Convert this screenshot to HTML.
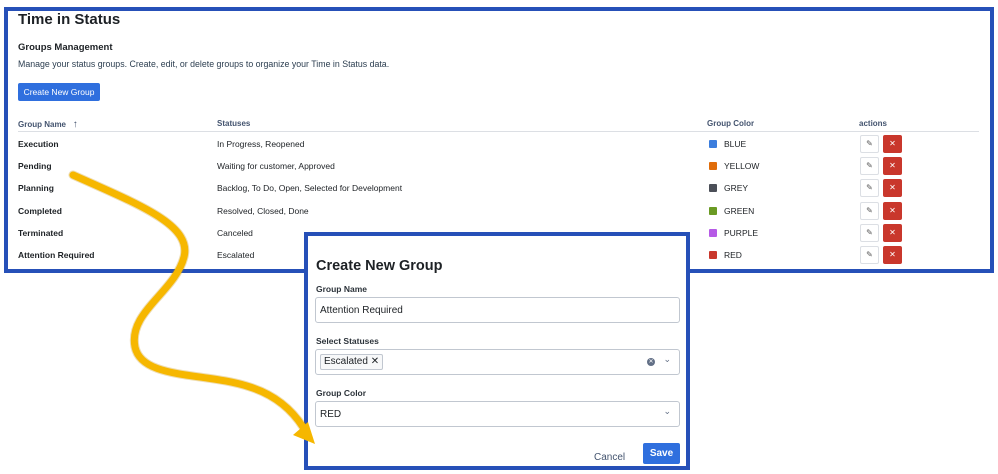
<!DOCTYPE html>
<html><head><meta charset="utf-8"><style>
*{box-sizing:border-box;margin:0;padding:0}
body{width:998px;height:474px;background:#fff;position:relative;overflow:hidden;font-family:"Liberation Sans",Arial,sans-serif;color:#1d2125}
.abs{position:absolute;white-space:nowrap}
#main{position:absolute;left:4px;top:7px;width:990px;height:266px;border:4px solid #2650b8;background:#fff}
.h{font-size:8px;color:#44546f;font-weight:bold}
.cell{font-size:8.5px;line-height:10px}
.b{font-weight:bold}
.sw{position:absolute;width:8px;height:8px;border-radius:1px}
.ed{position:absolute;width:19px;height:18px;border:1px solid #dcdfe4;background:#fff;border-radius:2px;font-size:8px;color:#555;text-align:center;line-height:16px}
.dl{position:absolute;width:19px;height:18px;background:#c9372c;border-radius:2px;color:#fff;font-size:8px;text-align:center;line-height:18px}
#modal{position:absolute;left:304px;top:232px;width:386px;height:238px;border:4px solid #2650b8;background:#fff}
.lbl{font-size:8.5px;font-weight:bold;color:#2c333a}
.inp{position:absolute;left:7px;width:365px;height:26px;border:1px solid #c1c7d0;border-radius:3px;font-size:10px;padding-left:4px;display:flex;align-items:center}
</style></head><body>
<div id="main"></div>
<div class="abs b" style="left:18px;top:11px;font-size:15px">Time in Status</div>
<div class="abs b" style="left:18px;top:42px;font-size:9.5px">Groups Management</div>
<div class="abs" style="left:18px;top:59px;font-size:8.8px;color:#2c3e50">Manage your status groups. Create, edit, or delete groups to organize your Time in Status data.</div>
<div class="abs" style="left:18px;top:83px;width:82px;height:18px;background:#2f6fde;border-radius:2px;color:#fff;font-size:8.5px;text-align:center;line-height:18px">Create New Group</div>
<div class="abs h" style="left:18px;top:119px">Group Name &nbsp;&nbsp;<span style="font-weight:normal;font-size:10px">↑</span></div>
<div class="abs h" style="left:217px;top:119px">Statuses</div>
<div class="abs h" style="left:707px;top:119px">Group Color</div>
<div class="abs h" style="left:859px;top:119px">actions</div>
<div class="abs" style="left:18px;top:131px;width:961px;height:1px;background:#dcdfe4"></div>

<div class="abs cell b" style="left:18px;top:139px">Execution</div><div class="abs cell" style="left:217px;top:139px">In Progress, Reopened</div>
<div class="abs cell b" style="left:18px;top:161px">Pending</div><div class="abs cell" style="left:217px;top:161px">Waiting for customer, Approved</div>
<div class="abs cell b" style="left:18px;top:183px">Planning</div><div class="abs cell" style="left:217px;top:183px">Backlog, To Do, Open, Selected for Development</div>
<div class="abs cell b" style="left:18px;top:206px">Completed</div><div class="abs cell" style="left:217px;top:206px">Resolved, Closed, Done</div>
<div class="abs cell b" style="left:18px;top:228px">Terminated</div><div class="abs cell" style="left:217px;top:228px">Canceled</div>
<div class="abs cell b" style="left:18px;top:250px">Attention Required</div><div class="abs cell" style="left:217px;top:250px">Escalated</div>

<div class="sw" style="left:709px;top:140px;background:#3b7ddd"></div><div class="abs cell" style="left:724px;top:139px">BLUE</div>
<div class="sw" style="left:709px;top:162px;background:#e06c0a"></div><div class="abs cell" style="left:724px;top:161px">YELLOW</div>
<div class="sw" style="left:709px;top:184px;background:#4b4f58"></div><div class="abs cell" style="left:724px;top:183px">GREY</div>
<div class="sw" style="left:709px;top:207px;background:#6a9a23"></div><div class="abs cell" style="left:724px;top:206px">GREEN</div>
<div class="sw" style="left:709px;top:229px;background:#b65ae6"></div><div class="abs cell" style="left:724px;top:228px">PURPLE</div>
<div class="sw" style="left:709px;top:251px;background:#c9372c"></div><div class="abs cell" style="left:724px;top:250px">RED</div>

<div class="ed" style="left:860px;top:135px">✎</div><div class="dl" style="left:883px;top:135px">✕</div>
<div class="ed" style="left:860px;top:157px">✎</div><div class="dl" style="left:883px;top:157px">✕</div>
<div class="ed" style="left:860px;top:179px">✎</div><div class="dl" style="left:883px;top:179px">✕</div>
<div class="ed" style="left:860px;top:202px">✎</div><div class="dl" style="left:883px;top:202px">✕</div>
<div class="ed" style="left:860px;top:224px">✎</div><div class="dl" style="left:883px;top:224px">✕</div>
<div class="ed" style="left:860px;top:246px">✎</div><div class="dl" style="left:883px;top:246px">✕</div>

<div id="modal">
<div class="abs b" style="left:8px;top:22px;font-size:14.5px">Create New Group</div>
<div class="abs lbl" style="left:8px;top:48px">Group Name</div>
<div class="inp" style="top:61px">Attention Required</div>
<div class="abs lbl" style="left:8px;top:100px">Select Statuses</div>
<div class="inp" style="top:113px"><span style="display:inline-block;border:1px solid #c1c7d0;border-radius:2px;line-height:14px;padding:0 3px;background:#f7f8f9">Escalated ✕</span>
<span style="position:absolute;right:24px;top:8px;width:8px;height:8px;border-radius:50%;background:#626f86;color:#fff;font-size:6px;line-height:8px;text-align:center">✕</span>
<span style="position:absolute;right:8px;top:4px;font-size:9px;color:#626f86">⌄</span></div>
<div class="abs lbl" style="left:8px;top:152px">Group Color</div>
<div class="inp" style="top:165px">RED<span style="position:absolute;right:8px;top:4px;font-size:9px;color:#626f86">⌄</span></div>
<div class="abs" style="left:286px;top:216px;font-size:10px;color:#44546f">Cancel</div>
<div class="abs" style="left:335px;top:207px;width:37px;height:21px;background:#2f6fde;border-radius:2px;color:#fff;font-size:10px;font-weight:bold;text-align:center;line-height:21px">Save</div>
</div>

<svg class="abs" style="left:0;top:0" width="998" height="474">
<path d="M73,175 C140,205 192,225 184,257 C175,292 128,312 135,347 C142,380 205,372 250,387 C275,395 292,410 303,427" fill="none" stroke="#c88f00" stroke-opacity="0.3" stroke-width="9" stroke-linecap="round"/>
<path d="M73,175 C140,205 192,225 184,257 C175,292 128,312 135,347 C142,380 205,372 250,387 C275,395 292,410 303,427" fill="none" stroke="#f6b700" stroke-width="7" stroke-linecap="round"/>
<polygon points="315,444 293,435 308,422" fill="#f6b700"/>
</svg>
</body></html>
